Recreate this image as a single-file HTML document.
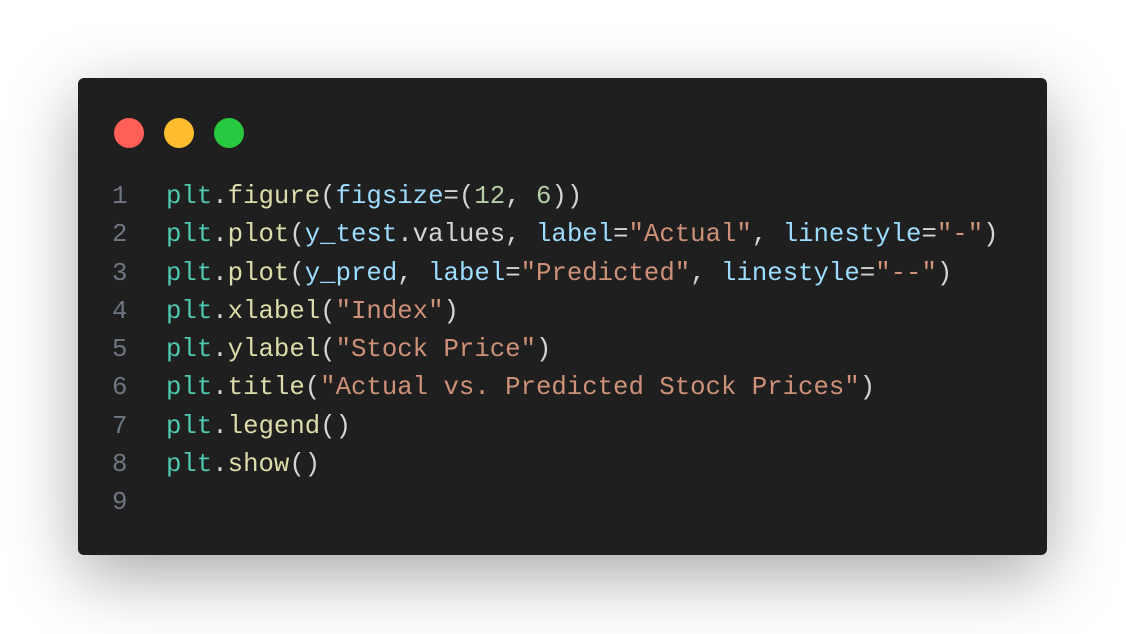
<!DOCTYPE html>
<html><head><style>
body{margin:0;width:1126px;height:634px;background:#fff;overflow:hidden;position:relative}
.card{position:absolute;left:78px;top:78px;width:969px;height:477px;background:#1f1f1f;border-radius:6px;box-shadow:0 20px 70px rgba(0,0,0,.35)}
.dot{position:absolute;top:40px;width:30px;height:30px;border-radius:50%}
pre{position:absolute;left:34px;top:100px;margin:0;font-family:"Liberation Mono",monospace;font-size:25.7px;line-height:38.3px;color:#d4d4d4}
.n{color:#6e7681;display:inline-block;width:54px}
.c{color:#4ec9b0}.f{color:#dcdcaa}.v{color:#9cdcfe}.m{color:#b5cea8}.s{color:#ce9178}
</style></head><body>
<div class="card">
<div class="dot" style="left:36px;background:#ff5f57"></div>
<div class="dot" style="left:86px;background:#febc2e"></div>
<div class="dot" style="left:136px;background:#28c840"></div>
<pre><span class="n">1</span><span class="c">plt</span>.<span class="f">figure</span>(<span class="v">figsize</span>=(<span class="m">12</span>, <span class="m">6</span>))
<span class="n">2</span><span class="c">plt</span>.<span class="f">plot</span>(<span class="v">y_test</span>.values, <span class="v">label</span>=<span class="s">"Actual"</span>, <span class="v">linestyle</span>=<span class="s">"-"</span>)
<span class="n">3</span><span class="c">plt</span>.<span class="f">plot</span>(<span class="v">y_pred</span>, <span class="v">label</span>=<span class="s">"Predicted"</span>, <span class="v">linestyle</span>=<span class="s">"--"</span>)
<span class="n">4</span><span class="c">plt</span>.<span class="f">xlabel</span>(<span class="s">"Index"</span>)
<span class="n">5</span><span class="c">plt</span>.<span class="f">ylabel</span>(<span class="s">"Stock Price"</span>)
<span class="n">6</span><span class="c">plt</span>.<span class="f">title</span>(<span class="s">"Actual vs. Predicted Stock Prices"</span>)
<span class="n">7</span><span class="c">plt</span>.<span class="f">legend</span>()
<span class="n">8</span><span class="c">plt</span>.<span class="f">show</span>()
<span class="n">9</span></pre>
</div>
</body></html>
